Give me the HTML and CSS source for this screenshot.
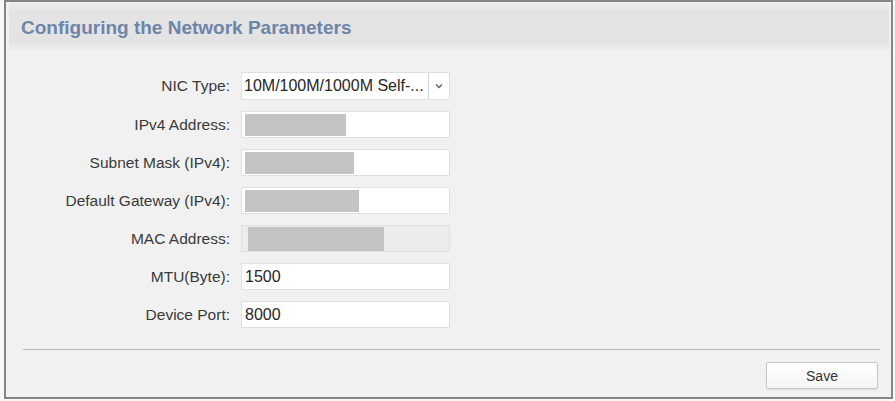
FILE: index.html
```html
<!DOCTYPE html>
<html lang="en">
<head>
    <meta charset="UTF-8">
    <title>Network Parameters</title>
    <link rel="stylesheet" href="styles.css">
</head>
<body>
    <div class="panel">
        <div class="panel-head">Configuring the Network Parameters</div>
        <div class="panel-body">
            <div class="row row-tall">
                <label>NIC Type:</label>
                <div class="select">
                    <span class="select-text">10M/100M/1000M Self-...</span>
                    <span class="select-arrow">
                        <svg width="8" height="6" viewBox="0 0 8 6"><path d="M1 1.5 L4 4.5 L7 1.5" fill="none" stroke="#666" stroke-width="1.5"/></svg>
                    </span>
                </div>
            </div>
            <div class="row">
                <label>IPv4 Address:</label>
                <div class="field"><span class="mask" style="width:101px"></span></div>
            </div>
            <div class="row">
                <label>Subnet Mask (IPv4):</label>
                <div class="field"><span class="mask" style="width:109px"></span></div>
            </div>
            <div class="row">
                <label>Default Gateway (IPv4):</label>
                <div class="field"><span class="mask" style="width:114px"></span></div>
            </div>
            <div class="row">
                <label>MAC Address:</label>
                <div class="field disabled"><span class="mask" style="width:136px"></span></div>
            </div>
            <div class="row">
                <label>MTU(Byte):</label>
                <div class="field">1500</div>
            </div>
            <div class="row">
                <label>Device Port:</label>
                <div class="field">8000</div>
            </div>
        </div>
        <div class="panel-foot">
            <button class="btn">Save</button>
        </div>
    </div>
</body>
</html>
```

FILE: styles.css
```css
body {
    margin: 0;
    padding: 0 2px 2px 4px;
    background: #f8f8f8;
    font-family: "Liberation Sans", Arial, sans-serif;
    color: #3a3a3a;
}

.panel {
    height: 399px;
    box-sizing: border-box;
    border: 2px solid #858585;
    background: #f1f1f1;
    display: flex;
    flex-direction: column;
}

.panel-head {
    margin: 1px 2px 0 3px;
    height: 47px;
    box-sizing: border-box;
    padding: 2px 0 0 12px;
    line-height: 45px;
    background: linear-gradient(#ebebeb 0, #e4e4e4 9px, #e3e3e3 40px, #ececec 44px);
    color: #6e85a9;
    font-weight: bold;
    font-size: 19px;
}

.panel-body {
    padding-top: 22px;
    display: flex;
    flex-direction: column;
    gap: 11px;
}

.row {
    display: flex;
    align-items: center;
    height: 27px;
}

.row-tall {
    height: 28px;
}

.row label {
    width: 224px;
    text-align: right;
    padding-right: 11px;
    font-size: 15.5px;
}

.field,
.select {
    width: 209px;
    height: 100%;
    box-sizing: border-box;
    border: 1px solid #e0e0e0;
    background: #fff;
    display: flex;
    align-items: center;
    padding-left: 3px;
    font-size: 16px;
    color: #262626;
}

.field.disabled {
    background: #ececec;
}

.disabled .mask {
    margin-left: 3px;
    height: 24px;
}

.mask {
    height: 22px;
    background: #c4c4c4;
}

.select {
    padding-left: 0;
}

.select-text {
    flex: 1;
    padding-left: 2px;
}

.select-arrow {
    width: 20px;
    height: 100%;
    border-left: 1px solid #d2d2d2;
    display: flex;
    align-items: center;
    justify-content: center;
}

.panel-foot {
    margin: auto 11px 0 17px;
    border-top: 1px solid #b8b8b8;
    padding: 12px 2px 8px 0;
    display: flex;
    justify-content: flex-end;
}

.btn {
    width: 112px;
    height: 27px;
    border: 1px solid #c6c6c6;
    border-radius: 2px;
    background: linear-gradient(#ffffff, #f5f5f5);
    box-shadow: 0 1px 1px rgba(0, 0, 0, 0.08);
    font-family: inherit;
    font-size: 14px;
    color: #333;
}
```
